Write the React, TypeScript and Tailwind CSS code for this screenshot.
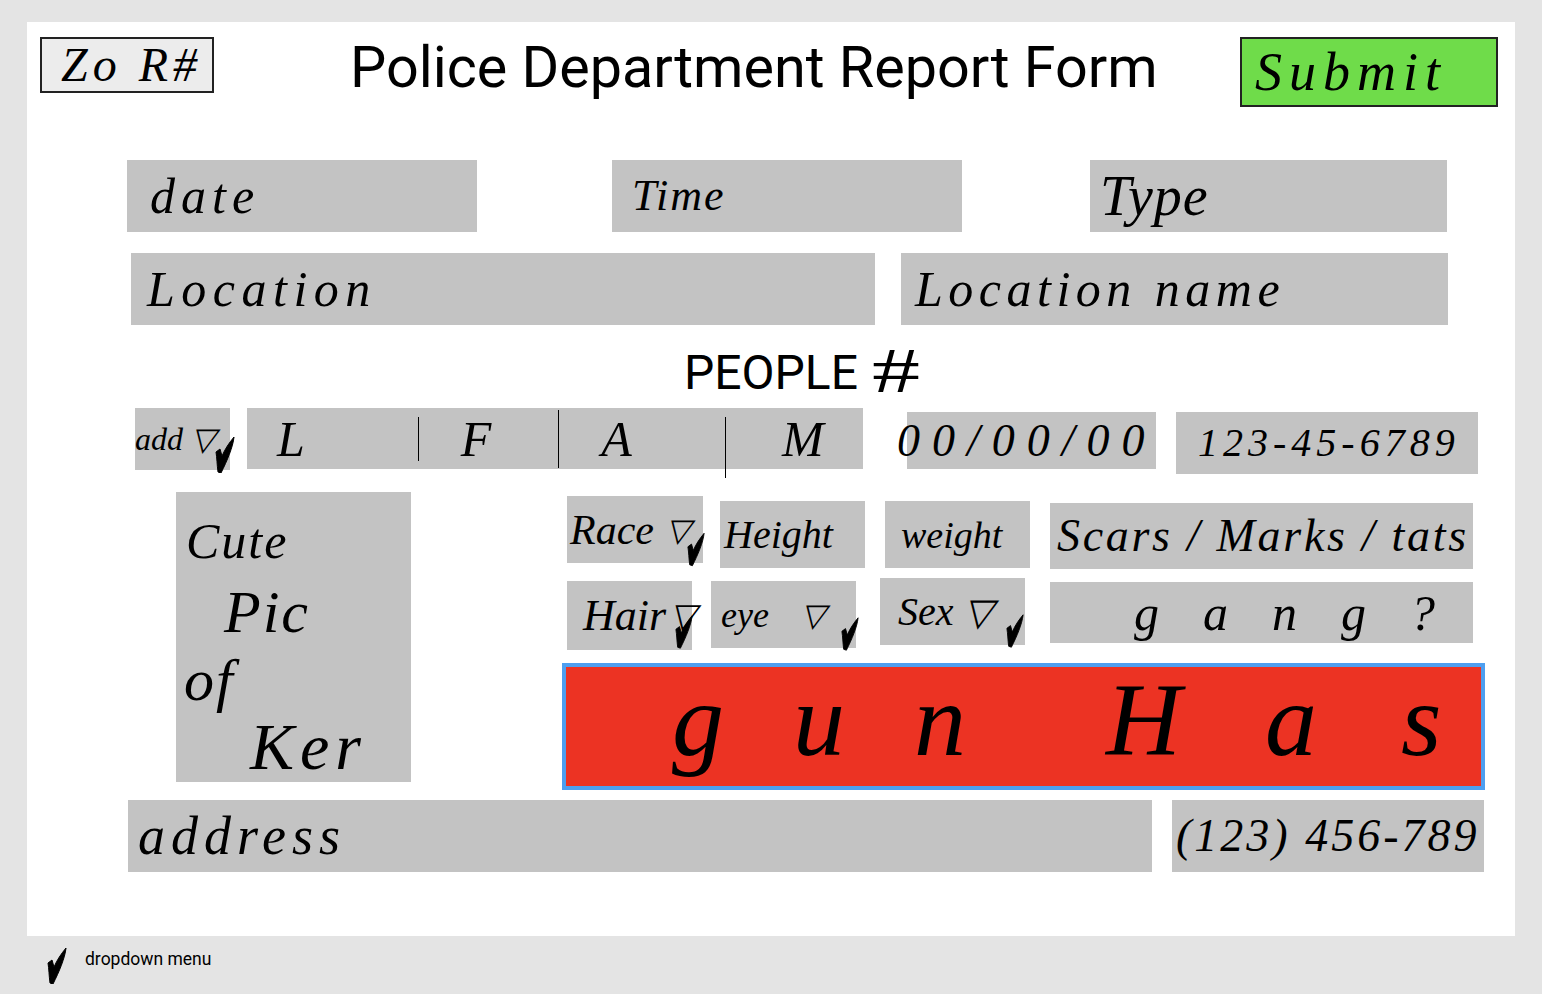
import type { ReactNode } from "react";

const hand = "font-['Liberation_Serif',serif] italic text-black whitespace-nowrap leading-none";

function Field({ className, children }: { className: string; children?: ReactNode }) {
  return <div className={`relative flex items-center shrink-0 bg-[#c3c3c3] ${hand} ${className}`}>{children}</div>;
}

// the little heavy tick that marks a dropdown
function Tick({ className }: { className: string }) {
  return (
    <svg viewBox="0 0 20 36" className={className} fill="#000" stroke="#000" strokeWidth="1">
      <path d="M1 15 L5 12 L7 19 C10 12 14 6 19 0 C18 10 12 24 6 36 L3 35 C2 28 2 21 1 15Z" />
    </svg>
  );
}

export default function App() {
  return (
    <div className="w-[1542px] h-[994px] overflow-hidden bg-[#e4e4e4] pt-[22px] font-['Roboto',sans-serif] text-black">
      <div className="w-[1488px] h-[914px] ml-[27px] bg-white flex flex-col">
        {/* HEADER */}
        <div className="flex items-start mt-[15px] pl-[13px]">
          <div className={`w-[174px] h-[56px] border-2 border-[#222] bg-[#ececec] flex items-center pl-[19px] text-[48px] tracking-[5px] ${hand}`}>
            Zo R#
          </div>
          <h1 className="ml-[136px] w-[806px] h-[62px] flex items-center text-[57.5px] font-normal whitespace-nowrap">
            Police Department Report Form
          </h1>
          <button className={`ml-[84px] w-[258px] h-[70px] border-2 border-[#222] bg-[#6fdc4a] flex items-center pl-[13px] text-[54px] tracking-[7px] ${hand}`}>
            Submit
          </button>
        </div>

        {/* DATE TIME TYPE */}
        <div className="flex mt-[53px] pl-[100px] h-[72px]">
          <Field className="w-[350px] pl-[23px] text-[50px] tracking-[6px]">date</Field>
          <Field className="ml-[135px] w-[350px] pl-[20px] text-[44px] tracking-[2px]">Time</Field>
          <Field className="ml-[128px] w-[357px] pl-[10px] text-[56px] tracking-[1px]">Type</Field>
        </div>

        {/* LOCATION */}
        <div className="flex mt-[21px] pl-[104px] h-[72px]">
          <Field className="w-[744px] pl-[16px] text-[50px] tracking-[6.5px]">Location</Field>
          <Field className="ml-[26px] w-[547px] pl-[14px] text-[50px] tracking-[5.5px]">Location name</Field>
        </div>

        {/* PEOPLE */}
        <div className="flex items-center mt-[25px] pl-[657px] h-[46px] text-[48px] whitespace-nowrap">
          PEOPLE
          <span className={`ml-[14px] -mt-[4px] text-[64px] scale-x-150 origin-left ${hand} not-italic`}>#</span>
        </div>

        {/* NAME ROW */}
        <div className="flex items-start mt-[12px] pl-[108px] h-[66px]">
          <Field className="w-[95px] h-[62px] text-[32px]">
            add ▽
            <Tick className="absolute left-[80px] top-[29px] w-[20px] h-[36px]" />
          </Field>
          <Field className="ml-[17px] w-[616px] h-[61px] text-[50px]">
            <span className="ml-[30px]">L</span>
            <span className="ml-[113px] w-px h-[44px] bg-black" />
            <span className="ml-[42px]">F</span>
            <span className="ml-[67px] w-px h-[58px] bg-black" />
            <span className="ml-[42px]">A</span>
            <span className="ml-[93px] w-px h-[61px] bg-black self-start mt-[9px]" />
            <span className="ml-[56px]">M</span>
          </Field>
          <Field className="ml-[44px] mt-[4px] w-[249px] h-[57px] text-[46px] tracking-[12px]">
            <span className="-ml-[10px]">00/00/00</span>
          </Field>
          <Field className="ml-[20px] mt-[4px] w-[302px] h-[62px] pl-[22px] text-[40px] tracking-[5px]">
            123-45-6789
          </Field>
        </div>

        {/* PERSON */}
        <div className="flex items-start mt-[18px] pl-[149px]">
          <Field className="w-[235px] h-[290px] !flex-col !items-start pt-[24px] text-[50px]">
            <span className="ml-[10px] tracking-[2px]">Cute</span>
            <span className="ml-[48px] mt-[16px] text-[60px] tracking-[2px]">Pic</span>
            <span className="ml-[8px] mt-[8px] text-[60px] tracking-[2px]">of</span>
            <span className="ml-[74px] mt-[4px] text-[66px] tracking-[6px]">Ker</span>
          </Field>

          <div className="ml-[151px] w-[923px] flex flex-col">
            <div className="flex items-start mt-[4px] h-[73px]">
              <Field className="ml-[5px] w-[136px] h-[67px] pl-[3px] text-[42px]">
                Race
                <span className="ml-[12px] text-[32px]">▽</span>
                <Tick className="absolute left-[120px] top-[36px] w-[18px] h-[35px]" />
              </Field>
              <Field className="ml-[17px] mt-[5px] w-[145px] h-[67px] pl-[4px] text-[40px]">Height</Field>
              <Field className="ml-[20px] mt-[5px] w-[145px] h-[67px] pl-[16px] text-[38px]">weight</Field>
              <Field className="ml-[20px] mt-[7px] w-[423px] h-[66px] pl-[7px] text-[46px] tracking-[2.7px]">
                Scars / Marks / tats
              </Field>
            </div>

            <div className="flex items-start mt-[9px] h-[72px]">
              <Field className="ml-[5px] mt-[3px] w-[125px] h-[69px] pl-[16px] text-[44px]">
                Hair
                <span className="ml-[4px] text-[34px]">▽</span>
                <Tick className="absolute left-[108px] top-[33px] w-[18px] h-[36px]" />
              </Field>
              <Field className="ml-[19px] mt-[3px] w-[145px] h-[67px] pl-[10px] text-[36px]">
                eye
                <span className="ml-[32px] text-[32px]">▽</span>
                <Tick className="absolute left-[130px] top-[36px] w-[18px] h-[34px]" />
              </Field>
              <Field className="ml-[24px] w-[145px] h-[67px] pl-[18px] text-[40px]">
                Sex
                <span className="ml-[10px] text-[38px]">▽</span>
                <Tick className="absolute left-[126px] top-[36px] w-[18px] h-[34px]" />
              </Field>
              <Field className="ml-[25px] mt-[4px] w-[423px] h-[61px] pl-[84px] text-[50px] tracking-[44px]">gang?</Field>
            </div>

            <div className={`mt-[13px] h-[127px] border-[4px] border-[#4e9ff0] bg-[#ec3323] flex items-center pl-[106px] pb-[14px] text-[104px] ${hand}`}>
              <span className="tracking-[69px]">gun</span>
              <span className="ml-[71px] tracking-[84px]">Has</span>
            </div>
          </div>
        </div>

        {/* ADDRESS */}
        <div className="flex mt-[10px] pl-[101px] h-[72px]">
          <Field className="w-[1024px] pl-[10px] text-[54px] tracking-[6px]">address</Field>
          <Field className="ml-[20px] w-[312px] pl-[4px] text-[46px] tracking-[3px]">(123) 456-789</Field>
        </div>
      </div>

      {/* LEGEND */}
      <div className="flex items-start ml-[47px] mt-[12px]">
        <Tick className="w-[20px] h-[36px]" />
        <span className="ml-[18px] mt-[1px] text-[17.5px] leading-[20px]">dropdown menu</span>
      </div>
    </div>
  );
}
